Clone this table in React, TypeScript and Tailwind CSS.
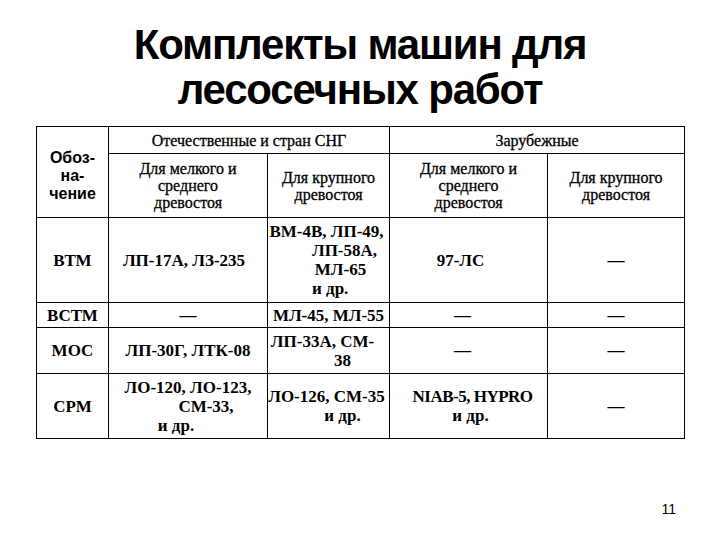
import React from 'react'

const cell = 'border border-black text-center align-middle p-0'
const head = "font-['Liberation_Serif','Times_New_Roman',serif] text-[16px] leading-[17px] font-normal [-webkit-text-stroke:0.3px_black]"
const body = "font-['Liberation_Serif','Times_New_Roman',serif] text-[17px] leading-[19px] font-bold"

const App = () => {
    return (
        <div className="w-[720px] h-[540px] bg-white text-black overflow-hidden">
            <h1 className="pt-[22px] text-center font-['Liberation_Sans',Arial,sans-serif] font-bold text-[42px] leading-[45px] tracking-[-1.2px]">
                Комплекты машин для
                <br />
                лесосечных работ
            </h1>
            <table className="mt-[14px] ml-[36px] w-[648px] table-fixed border-collapse">
                <colgroup>
                    <col className="w-[72px]" />
                    <col className="w-[159px]" />
                    <col className="w-[122px]" />
                    <col className="w-[158px]" />
                    <col className="w-[137px]" />
                </colgroup>
                <tbody>
                    <tr className="h-[27px]">
                        <td rowSpan={2} className={`${cell} pt-2 font-['Liberation_Sans',Arial,sans-serif] font-bold text-[16px] leading-[18px]`}>
                            Обоз-
                            <br />
                            на-
                            <br />
                            чение
                        </td>
                        <td colSpan={2} className={`${cell} ${head}`}>Отечественные и стран СНГ</td>
                        <td colSpan={2} className={`${cell} ${head}`}>Зарубежные</td>
                    </tr>
                    <tr className="h-[64px]">
                        <td className={`${cell} ${head}`}>
                            Для мелкого и
                            <br />
                            среднего
                            <br />
                            древостоя
                        </td>
                        <td className={`${cell} ${head}`}>
                            Для крупного
                            <br />
                            древостоя
                        </td>
                        <td className={`${cell} ${head}`}>
                            Для мелкого и
                            <br />
                            среднего
                            <br />
                            древостоя
                        </td>
                        <td className={`${cell} ${head}`}>
                            Для крупного
                            <br />
                            древостоя
                        </td>
                    </tr>
                    <tr className="h-[85px]">
                        <td className={`${cell} ${body}`}>ВТМ</td>
                        <td className={`${cell} ${body} pr-2`}>ЛП-17А, ЛЗ-235</td>
                        <td className={`${cell} ${body}`}>
                            <div className="pr-1">ВМ-4В, ЛП-49,</div>
                            <div className="pl-8">ЛП-58А,</div>
                            <div className="pl-6">МЛ-65</div>
                            <div className="text-left pl-[44px]">и др.</div>
                        </td>
                        <td className={`${cell} ${body} pr-4`}>97-ЛС</td>
                        <td className={`${cell} ${body}`}>—</td>
                    </tr>
                    <tr className="h-[25px]">
                        <td className={`${cell} ${body}`}>ВСТМ</td>
                        <td className={`${cell} ${body}`}>—</td>
                        <td className={`${cell} ${body}`}>МЛ-45, МЛ-55</td>
                        <td className={`${cell} ${body} pr-3`}>—</td>
                        <td className={`${cell} ${body}`}>—</td>
                    </tr>
                    <tr className="h-[46px]">
                        <td className={`${cell} ${body}`}>МОС</td>
                        <td className={`${cell} ${body}`}>ЛП-30Г, ЛТК-08</td>
                        <td className={`${cell} ${body}`}>
                            <div className="pr-3">ЛП-33А, СМ-</div>
                            <div className="pl-7">38</div>
                        </td>
                        <td className={`${cell} ${body} pr-3`}>—</td>
                        <td className={`${cell} ${body}`}>—</td>
                    </tr>
                    <tr className="h-[65px]">
                        <td className={`${cell} ${body}`}>СРМ</td>
                        <td className={`${cell} ${body}`}>
                            <div>ЛО-120, ЛО-123,</div>
                            <div className="pl-9">СМ-33,</div>
                            <div className="pr-6">и др.</div>
                        </td>
                        <td className={`${cell} ${body}`}>
                            <div className="pr-1">ЛО-126, СМ-35</div>
                            <div className="pl-7">и др.</div>
                        </td>
                        <td className={`${cell} ${body}`}>
                            <div className="pl-2 tracking-[-0.5px]">NIAB-5, HYPRO</div>
                            <div className="pl-1">и др.</div>
                        </td>
                        <td className={`${cell} ${body}`}>—</td>
                    </tr>
                </tbody>
            </table>
            <div className="flex justify-end pr-[44px] pt-[62px]">
                <p className="font-['Liberation_Sans',Arial,sans-serif] text-[14px] leading-[16px]">11</p>
            </div>
        </div>
    )
}

export default App
